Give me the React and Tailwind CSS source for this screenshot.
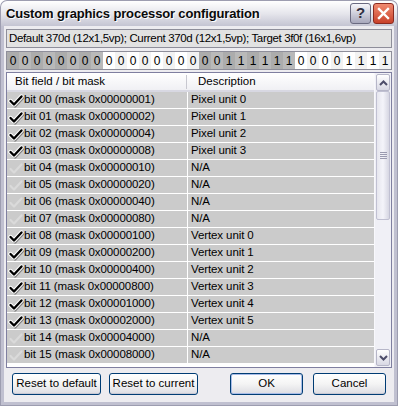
import React from "react";

const bitsStr = "00000000000000000011111100001111";
const descs = [
  "Pixel unit 0", "Pixel unit 1", "Pixel unit 2", "Pixel unit 3",
  "N/A", "N/A", "N/A", "N/A",
  "Vertex unit 0", "Vertex unit 1", "Vertex unit 2", "Vertex unit 3", "Vertex unit 4", "Vertex unit 5",
  "N/A", "N/A",
];
const checked = [1,1,1,1,0,0,0,0,1,1,1,1,1,1,0,0];

function Check({ on }) {
  if (!on) {
    return (
      <svg width="16" height="15" viewBox="0 0 16 15" className="shrink-0">
        <path d="M2.5 8 L6 11.5 L13.5 3.5" fill="none" stroke="#dadada" strokeWidth="2.2" strokeLinecap="round" strokeLinejoin="round" />
      </svg>
    );
  }
  return (
    <svg width="16" height="15" viewBox="0 0 16 15" className="shrink-0">
      <path d="M3.5 9 L7 12.5 L14.5 4.5" fill="none" stroke="#808080" strokeWidth="4" strokeLinecap="round" strokeLinejoin="round" />
      <path d="M2.5 8 L6 11.5 L13.5 3.5" fill="none" stroke="#ffffff" strokeWidth="4.4" strokeLinecap="round" strokeLinejoin="round" />
      <path d="M2.5 8 L6 11.5 L13.5 3.5" fill="none" stroke="#000000" strokeWidth="2.4" strokeLinecap="round" strokeLinejoin="round" />
    </svg>
  );
}

function Btn({ children, w, def }) {
  return (
    <div
      className={`h-[22px] ${w} rounded-[3px] border border-[#003c74] bg-gradient-to-b from-[#ffffff] via-[#f4f4f4] to-[#dcdce2] flex items-center justify-center text-[11.5px] text-black ${def ? "shadow-[inset_0_0_0_1px_#a8bce8]" : "shadow-[inset_0_-1px_0_#c8c8d4]"}`}
    >
      {children}
    </div>
  );
}

export default function App() {
  return (
    <div className="w-[398px] h-[406px] font-['Liberation_Sans',Arial,sans-serif] bg-[#9d9db0] rounded-t-[7px] p-px flex flex-col overflow-hidden">
      {/* title bar */}
      <div className="h-[25px] shrink-0 rounded-t-[6px] bg-gradient-to-b from-[#ffffff] via-[#e6e6ec] to-[#c4c4d2] flex items-center pl-[5px] pr-[3px]">
        <div className="flex-1 text-[13px] font-bold text-[#0a0a0a] tracking-[-0.15px] [text-shadow:1px_1px_0_#ffffff]">
          Custom graphics processor configuration
        </div>
        <div className="flex gap-[2px]">
          <div className="w-[21px] h-[21px] rounded-[3px] border border-[#6a6a80] bg-gradient-to-b from-[#f6f6fa] to-[#a8a8bc] flex items-center justify-center text-[15px] font-bold text-[#2e2e40]">?</div>
          <div className="w-[21px] h-[21px] rounded-[3px] border border-[#8a2a20] bg-gradient-to-b from-[#f08a70] to-[#c8402a] flex items-center justify-center">
            <svg width="13" height="13" viewBox="0 0 13 13">
              <path d="M2 2 L11 11 M11 2 L2 11" stroke="#ffffff" strokeWidth="2.4" strokeLinecap="square" />
            </svg>
          </div>
        </div>
      </div>
      {/* body */}
      <div className="flex-1 bg-[#c0c0d0] px-[3px] pb-[3px] flex flex-col">
        <div className="flex-1 bg-[#edecf0] flex flex-col px-[1px] pt-[3px]">
          {/* info */}
          <div className="mx-[1px] h-[19px] border border-[#8e8e9a] bg-[#e2e2e2] flex items-center pl-[2px] text-[11.5px] tracking-[-0.35px] text-black whitespace-nowrap overflow-hidden">
            Default 370d (12x1,5vp); Current 370d (12x1,5vp); Target 3f0f (16x1,6vp)
          </div>
          {/* bits */}
          <div className="mx-[1px] mt-[3px] h-[19px] border border-[#8e8e9a] flex">
            {bitsStr.split("").map((b, i) => {
              const grey = Math.floor(i / 8) % 2 === 0;
              const odd = i % 2 === 1;
              const cls = grey
                ? odd ? "bg-[#b9b9b9]" : "bg-[#acacac]"
                : odd ? "bg-[#f2f2f2]" : "bg-[#ffffff]";
              return (
                <div key={i} className={`w-[12px] shrink-0 flex items-center justify-center text-[12px] text-black ${cls}`}>
                  {b}
                </div>
              );
            })}
          </div>
          {/* list */}
          <div className="mx-[1px] mt-[2px] h-[296px] border border-[#7f7fa0] bg-white flex">
            <div className="flex-1 flex flex-col">
              <div className="h-[19px] shrink-0 flex items-center bg-gradient-to-b from-[#ffffff] to-[#f0f0f4] border-b-2 border-[#d8d8e2] text-[11.5px] text-black">
                <div className="w-[181px] pl-[8px] flex items-center justify-between pr-[1px]">
                  <span>Bit field / bit mask</span>
                  <span className="w-px h-[14px] bg-[#c8c8d0]"></span>
                </div>
                <div className="pl-[10px]">Description</div>
              </div>
              <div className="flex flex-col bg-white">
                {descs.map((d, i) => (
                  <div key={i} className="h-[17px] shrink-0 flex border-b border-white text-[11.5px] tracking-[-0.1px] text-black">
                    <div className="w-[180px] bg-[#cbcbcb] flex items-center pl-[1px] whitespace-nowrap">
                      <Check on={checked[i]} />
                      <span>bit {String(i).padStart(2, "0")} (mask 0x{(1 << i).toString(16).padStart(8, "0").toUpperCase()})</span>
                    </div>
                    <div className="w-px bg-white" />
                    <div className="flex-1 bg-[#cbcbcb] flex items-center pl-[3px]">{d}</div>
                  </div>
                ))}
              </div>
            </div>
            {/* scrollbar */}
            <div className="w-[17px] shrink-0 bg-[#f0f0f6] border-l border-[#f8f8fc] flex flex-col">
              <div className="h-[17px] m-px mb-0 rounded-[2px] border border-[#b6b6c8] bg-gradient-to-b from-[#ffffff] to-[#d8d8e4] flex items-center justify-center">
                <svg width="9" height="6" viewBox="0 0 9 6"><path d="M1 5 L4.5 1.5 L8 5" fill="none" stroke="#4d4d6a" strokeWidth="2" /></svg>
              </div>
              <div className="h-[129px] mx-px rounded-[2px] border border-[#c0c0d2] bg-gradient-to-r from-[#e6e6ee] via-[#f4f4fa] to-[#d6d6e2] flex items-center justify-center">
                <div className="flex flex-col gap-[1px]">
                  <div className="w-[7px] h-px bg-[#9a9ab0]" />
                  <div className="w-[7px] h-px bg-[#9a9ab0]" />
                  <div className="w-[7px] h-px bg-[#9a9ab0]" />
                  <div className="w-[7px] h-px bg-[#9a9ab0]" />
                </div>
              </div>
              <div className="flex-1" />
              <div className="h-[17px] m-px mt-0 rounded-[2px] border border-[#b6b6c8] bg-gradient-to-b from-[#ffffff] to-[#d8d8e4] flex items-center justify-center">
                <svg width="9" height="6" viewBox="0 0 9 6"><path d="M1 1 L4.5 4.5 L8 1" fill="none" stroke="#4d4d6a" strokeWidth="2" /></svg>
              </div>
            </div>
          </div>
          {/* buttons */}
          <div className="flex items-center mt-[5px] pl-[7px] pr-[7px]">
            <Btn w="w-[89px]">Reset to default</Btn>
            <div className="w-[8px]" />
            <Btn w="w-[89px]">Reset to current</Btn>
            <div className="flex-1" />
            <Btn w="w-[73px]" def>OK</Btn>
            <div className="w-[10px]" />
            <Btn w="w-[73px]">Cancel</Btn>
          </div>
        </div>
      </div>
    </div>
  );
}
